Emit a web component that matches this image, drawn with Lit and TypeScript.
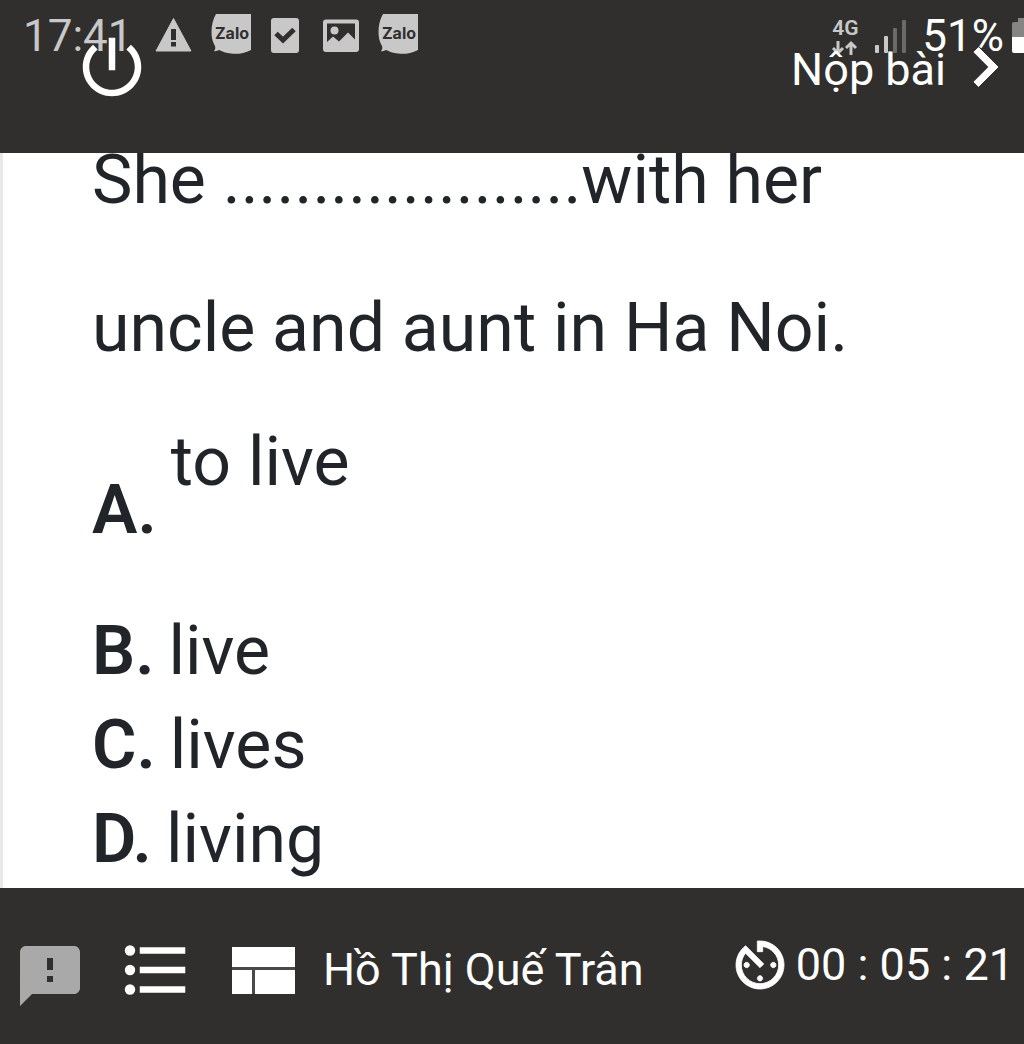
import { LitElement, html, css, svg } from "lit";
import { customElement, state } from "lit/decorators.js";
import { classMap } from "lit/directives/class-map.js";

const zaloIcon = html`
  <svg class="glyph" width="40" height="44" viewBox="0 0 40 44" role="img" aria-label="Zalo">
    <path d="M5 0H40V36C33 39.500 26 40.500 20 39.500 15 39 11 37.500 8 36 6.500 37 4.500 37.500 3 37 4.500 35.500 4.500 33.500 4 32 1.500 28 .500 23 .500 18 .500 11 2 5 5 0Z"/>
    <text class="zalo" x="21" y="25" text-anchor="middle">Zalo</text>
  </svg>`;

@customElement("phone-status")
export class PhoneStatus extends LitElement {
  static styles = css`
    :host { display: flex; align-items: center; height: 72px; overflow: hidden; color: #c8c8c8; font: 44px/52px Roboto, sans-serif; }
    .time { margin: 0 22px 0 23px; }
    .icons { display: flex; gap: 19px; flex: 1; }
    .glyph { display: block; fill: currentColor; flex: none; }
    .zalo { font: 700 16px Inter, sans-serif; fill: #302f2d; }
    .cut { fill: #302f2d; }
    .net { font: 600 21px/24px Roboto, sans-serif; width: 28px; margin-right: 15px; display: flex; flex-direction: column; align-items: center; }
    .signal { margin-right: 14px; }
    .charge { color: #fff; margin-right: 8px; }
    .faint { fill: #6a6a69; }
    .full { fill: #fff; }
    .drained { fill: #858584; }
  `;

  render() {
    return html`
      <span class="time">17:41</span>
      <div class="icons">
        <svg class="glyph" width="37" height="44" viewBox="0 0 37 44" role="img" aria-label="Warning">
          <path d="M18.500 4.500 36 37H1Z" stroke="currentColor" stroke-linejoin="round"/>
          <path class="cut" d="M16 15h5v11h-5zM16 28h5v4.500h-5z"/>
        </svg>
        <div>${zaloIcon}</div>
        <svg class="glyph" width="34" height="44" viewBox="0 0 34 44" role="img" aria-label="Task">
          <rect x="1" y="4" width="28" height="35" rx="3"/>
          <path d="M6 19.500 13 26 24 15.500" fill="none" stroke="#302f2d" stroke-width="5"/>
        </svg>
        <svg class="glyph" width="36" height="44" viewBox="0 0 36 44" role="img" aria-label="Picture">
          <path fill-rule="evenodd" d="M3 5.500H33a3 3 0 0 1 3 3V35a3 3 0 0 1-3 3H3a3 3 0 0 1-3-3V8.500a3 3 0 0 1 3-3ZM4 9.500V28L10 22.500 16 27.500 25 18.500 32 25.500V9.500Z"/>
          <circle cx="11.500" cy="16.500" r="4"/>
        </svg>
        <div>${zaloIcon}</div>
      </div>
      <div class="net">
        <span>4G</span>
        <svg class="glyph" width="28" height="16" viewBox="0 0 28 16" aria-hidden="true">
          <path d="M7 1V13M2 8 7 13 12 8M20 15V3M15 8 20 3 25 8" fill="none" stroke="currentColor" stroke-width="3"/>
        </svg>
      </div>
      <svg class="glyph signal" width="34" height="36" viewBox="0 0 34 36" role="img" aria-label="Signal">
        <rect x="1" y="27" width="4" height="8" rx="1"/>
        <rect x="10" y="18" width="4" height="17" rx="1"/>
        <rect class="faint" x="19" y="10" width="4" height="25" rx="1"/>
        <rect class="faint" x="28" y="2" width="4" height="33" rx="1"/>
      </svg>
      <span class="charge">51%</span>
      <svg class="glyph" width="12" height="36" viewBox="0 0 12 36" role="img" aria-label="Battery">
        <path class="drained" d="M0 6Q0 4 2 4H6V0H12V19H0Z"/>
        <path class="full" d="M0 19H12V35H2Q0 35 0 33Z"/>
      </svg>`;
  }
}

interface Answer { key: string; text: string; raised?: boolean; }

const answers: Answer[] = [
  { key: "A.", text: "to live", raised: true },
  { key: "B.", text: "live" },
  { key: "C.", text: "lives" },
  { key: "D.", text: "living" },
];

const shapes = {
  power: svg`<path d="M13 3h-2v10h2V3zm4.830 2.170l-1.420 1.420C17.990 7.860 19 9.810 19 12c0 3.870-3.130 7-7 7s-7-3.130-7-7c0-2.190 1.010-4.140 2.580-5.420L6.170 5.170C4.230 6.820 3 9.260 3 12c0 4.970 4.030 9 9 9s9-4.030 9-9c0-2.740-1.230-5.180-3.170-6.830z"/>`,
  next: svg`<path d="M10 6L8.590 7.410 13.170 12l-4.580 4.590L10 18l6-6z" stroke="currentColor" stroke-width=".3"/>`,
  report: svg`<path d="M20 2H4c-1.100 0-1.990.9-1.990 2L2 22l4-4h14c1.100 0 2-.9 2-2V4c0-1.100-.9-2-2-2zm-7 12h-2v-2h2v2zm0-4h-2V6h2v4z"/>`,
  list: svg`<circle cx="4" cy="6" r="1.600"/><circle cx="4" cy="12" r="1.600"/><circle cx="4" cy="18" r="1.600"/><path d="M7 5h14v2H7zM7 11h14v2H7zM7 17h14v2H7z"/>`,
  timer: svg`<path d="M11 17c0 .55.45 1 1 1s1-.45 1-1-.45-1-1-1-1 .45-1 1zm0-14v4h2V5.080c3.390.49 6 3.390 6 6.920 0 3.870-3.130 7-7 7s-7-3.130-7-7c0-1.680.59-3.220 1.580-4.420L12 13l1.410-1.410-6.800-6.800v.02C4.420 6.450 3 9.050 3 12c0 4.970 4.020 9 9 9 4.970 0 9-4.030 9-9s-4.030-9-9-9h-1zm7 9c0-.55-.45-1-1-1s-1 .45-1 1 .45 1 1 1 1-.45 1-1zM6 12c0 .55.45 1 1 1s1-.45 1-1-.45-1-1-1-1 .45-1 1z" stroke="currentColor" stroke-width=".3"/>`,
};

@customElement("app-root")
export class AppRoot extends LitElement {
  static styles = css`
    :host { display: flex; flex-direction: column; min-height: 100vh; position: relative; background: #fff; color: #212529; font: 68px/94px Roboto, sans-serif; }
    * { box-sizing: border-box; }
    button { background: none; border: 0; padding: 0; margin: 0; color: inherit; font: inherit; text-align: left; cursor: pointer; }
    svg { display: block; fill: currentColor; flex: none; }
    header, footer { background: #302f2d; color: #fff; font-size: 45px; line-height: 52px; flex: none; }
    header { height: 153px; }
    phone-status { position: absolute; top: 0; left: 0; right: 0; }
    .bar { position: relative; display: flex; justify-content: space-between; align-items: center; padding: 28px 0 0 73px; }
    .submit { display: flex; align-items: center; }
    .submit span { padding-top: 6px; }
    main { flex: 1; overflow: hidden; border-left: 3px solid #e8e8e8; padding-left: 89px; }
    .question { margin: -47px 0 0; line-height: 148px; }
    .answers { list-style: none; margin: 0; padding: 0; }
    .answer { display: flex; gap: 14px; }
    .answer b { font-weight: 600; }
    .raised { padding: 13px 0 47px; }
    .raised b { padding-top: 48px; }
    footer { height: 156px; display: flex; align-items: center; padding: 8px 10px 0 14px; }
    .report { color: #a9a9a9; padding-top: 12px; margin-right: 31px; }
    .list { margin-right: 37px; }
    .name { margin-left: 28px; flex: 1; white-space: nowrap; }
    .clock { display: flex; align-items: center; gap: 4px; padding-bottom: 10px; white-space: nowrap; }
  `;

  @state() private chosen = "";

  private icon(shape: unknown, size: number) {
    return html`<svg width=${size} height=${size} viewBox="0 0 24 24" aria-hidden="true">${shape}</svg>`;
  }

  render() {
    return html`
      <header>
        <phone-status></phone-status>
        <div class="bar">
          <button aria-label="Thoát">${this.icon(shapes.power, 78)}</button>
          <button class="submit"><span>Nộp bài</span>${this.icon(shapes.next, 78)}</button>
        </div>
      </header>
      <main>
        <p class="question">She ....................with her<br>uncle and aunt in Ha Noi.</p>
        <ol class="answers">
          ${answers.map((a) => html`
            <li>
              <button
                class=${classMap({ answer: true, raised: !!a.raised })}
                aria-pressed=${this.chosen === a.key ? "true" : "false"}
                @click=${() => { this.chosen = a.key; }}
              ><b>${a.key}</b><span>${a.text}</span></button>
            </li>`)}
        </ol>
      </main>
      <footer>
        <button class="report" aria-label="Báo lỗi">${this.icon(shapes.report, 72)}</button>
        <button class="list" aria-label="Danh sách câu hỏi">${this.icon(shapes.list, 78)}</button>
        <button aria-label="Bố cục">
          <svg width="63" height="47" viewBox="0 0 63 47" aria-hidden="true">
            <path d="M0 0H63V20H0ZM0 23H20V47H0ZM23 23H63V47H23Z"/>
            <path d="M0 20H63V23H0ZM20 23H23V47H20Z" fill="#4a4947"/>
          </svg>
        </button>
        <span class="name">Hồ Thị Quế Trân</span>
        <div class="clock">${this.icon(shapes.timer, 64)}<span>00 : 05 : 21</span></div>
      </footer>`;
  }
}
